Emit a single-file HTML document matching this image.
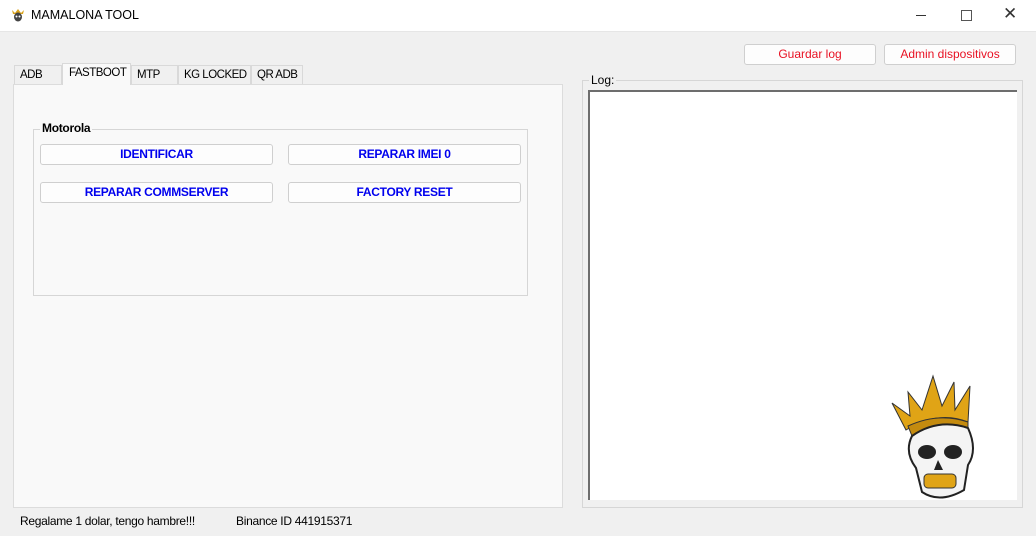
<!DOCTYPE html>
<html><head><meta charset="utf-8"><style>
body{margin:0;width:1036px;height:536px;overflow:hidden;font-family:"Liberation Sans",sans-serif;font-size:12px;background:#f0f0f0;position:relative}
.a{position:absolute;white-space:nowrap}
.btn{position:absolute;background:#fdfdfd;border:1px solid #cfcfcf;border-radius:3px;box-sizing:border-box;text-align:center;font-weight:bold;color:#0000ee;font-size:12px;line-height:19px;letter-spacing:-0.3px;white-space:nowrap}
.tab{position:absolute;top:65px;height:19px;border:1px solid #d9d9d9;border-bottom:none;background:#f0f0f0;line-height:19px;font-size:11.5px;padding:0 0 0 5px;box-sizing:border-box;white-space:nowrap;overflow:hidden;letter-spacing:-0.5px}
</style></head><body>
<div class="a" style="left:0;top:0;width:1036px;height:31px;background:#fff"></div>
<svg class="a" style="left:10px;top:7px" width="16" height="16"><path d="M2 3 L5 6 L8 2 L11 6 L14 3 L13 7 H3Z" fill="#d9a21b"/><ellipse cx="8" cy="10" rx="4" ry="4.5" fill="#444"/><circle cx="6.5" cy="9.5" r="1" fill="#fff"/><circle cx="9.5" cy="9.5" r="1" fill="#fff"/></svg>
<div class="a" style="left:31px;top:8px;font-size:12.5px">MAMALONA TOOL</div>
<div class="a" style="left:916px;top:15px;width:10px;height:1px;background:#333"></div>
<div class="a" style="left:961px;top:10px;width:9px;height:9px;border:1px solid #555"></div>
<div class="a" style="left:1003px;top:4px;font-size:17px;color:#333">✕</div>
<div class="a" style="left:0;top:31px;width:1036px;height:1px;background:#e6e6e6"></div>

<div class="tab" style="left:14px;width:48px">ADB</div>
<div class="tab" style="left:62px;top:63px;height:22px;width:69px;background:#f9f9f9;z-index:2;padding-left:6px">FASTBOOT</div>
<div class="tab" style="left:131px;width:47px">MTP</div>
<div class="tab" style="left:178px;width:73px">KG LOCKED</div>
<div class="tab" style="left:251px;width:52px">QR ADB</div>
<div class="a" style="left:13px;top:84px;width:550px;height:424px;background:#f9f9f9;border:1px solid #dcdcdc;box-sizing:border-box"></div>
<div class="a" style="left:33px;top:129px;width:495px;height:167px;border:1px solid #d6d6d6;box-sizing:border-box"></div>
<div class="a" style="left:40px;top:121px;background:#f9f9f9;font-weight:bold;padding:0 2px;font-size:12px;letter-spacing:-0.3px">Motorola</div>
<div class="btn" style="left:40px;top:144px;width:233px;height:21px">IDENTIFICAR</div>
<div class="btn" style="left:288px;top:144px;width:233px;height:21px">REPARAR IMEI 0</div>
<div class="btn" style="left:40px;top:182px;width:233px;height:21px">REPARAR COMMSERVER</div>
<div class="btn" style="left:288px;top:182px;width:233px;height:21px">FACTORY RESET</div>

<div class="a" style="left:20px;top:514px;letter-spacing:-0.3px">Regalame 1 dolar, tengo hambre!!!</div>
<div class="a" style="left:236px;top:514px;letter-spacing:-0.3px">Binance ID 441915371</div>

<div class="btn" style="left:744px;top:44px;width:132px;height:21px;color:#e81123;font-weight:normal;letter-spacing:0">Guardar log</div>
<div class="btn" style="left:884px;top:44px;width:132px;height:21px;color:#e81123;font-weight:normal;letter-spacing:0">Admin dispositivos</div>
<div class="a" style="left:582px;top:80px;width:441px;height:428px;border:1px solid #d6d6d6;box-sizing:border-box"></div>
<div class="a" style="left:589px;top:73px;background:#f0f0f0;padding:0 2px">Log:</div>
<div class="a" style="left:588px;top:90px;width:429px;height:410px;background:#fff;border-top:2px solid #6d6d6d;border-left:2px solid #6d6d6d;box-sizing:border-box"></div>
<svg class="a" style="left:888px;top:370px" width="96" height="132">
<path d="M4 33 L22 46 L20 22 L34 40 L45 6 L54 36 L66 12 L67 40 L82 16 L80 52 Q50 40 18 60Z" fill="#e0a416" stroke="#333" stroke-width="1"/>
<path d="M20 56 Q50 42 80 52 L80 60 Q50 50 24 66Z" fill="#c48b0f" stroke="#333"/>
<path d="M24 66 Q50 48 80 58 Q90 80 80 95 L76 120 Q52 134 34 122 L28 98 Q16 82 24 66Z" fill="#f4f4f4" stroke="#222" stroke-width="2"/>
<ellipse cx="39" cy="82" rx="9" ry="7" fill="#222"/><ellipse cx="65" cy="82" rx="9" ry="7" fill="#222"/>
<path d="M50 90 L46 100 H55Z" fill="#222"/>
<rect x="36" y="104" width="32" height="14" rx="4" fill="#e0a416" stroke="#333"/>
</svg>
</body></html>
